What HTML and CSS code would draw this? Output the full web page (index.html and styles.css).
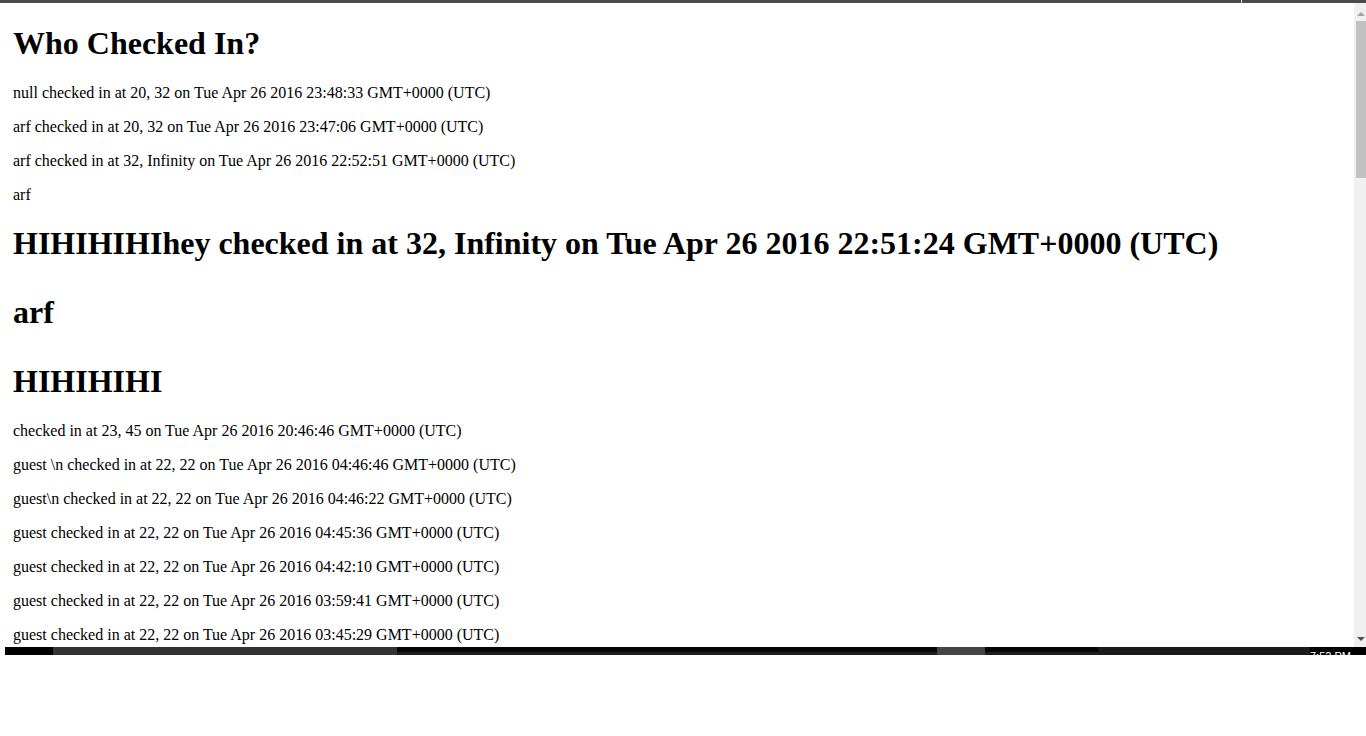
FILE: index.html
```html
<!DOCTYPE html>
<html>
<head>
<meta charset="utf-8">
<title>Who Checked In?</title>
<link rel="stylesheet" href="styles.css">
</head>
<body>
<div class="topbar"><span class="tick"></span></div>
<div class="window">
  <div class="page">
    <h1>Who Checked In?</h1>
    <p>null checked in at 20, 32 on Tue Apr 26 2016 23:48:33 GMT+0000 (UTC)</p>
    <p>arf checked in at 20, 32 on Tue Apr 26 2016 23:47:06 GMT+0000 (UTC)</p>
    <p>arf checked in at 32, Infinity on Tue Apr 26 2016 22:52:51 GMT+0000 (UTC)</p>
    <p>arf</p>
    <h1>HIHIHIHIhey checked in at 32, Infinity on Tue Apr 26 2016 22:51:24 GMT+0000 (UTC)</h1>
    <h1>arf</h1>
    <h1>HIHIHIHI</h1>
    <p>checked in at 23, 45 on Tue Apr 26 2016 20:46:46 GMT+0000 (UTC)</p>
    <p>guest \n checked in at 22, 22 on Tue Apr 26 2016 04:46:46 GMT+0000 (UTC)</p>
    <p>guest\n checked in at 22, 22 on Tue Apr 26 2016 04:46:22 GMT+0000 (UTC)</p>
    <p>guest checked in at 22, 22 on Tue Apr 26 2016 04:45:36 GMT+0000 (UTC)</p>
    <p>guest checked in at 22, 22 on Tue Apr 26 2016 04:42:10 GMT+0000 (UTC)</p>
    <p>guest checked in at 22, 22 on Tue Apr 26 2016 03:59:41 GMT+0000 (UTC)</p>
    <p>guest checked in at 22, 22 on Tue Apr 26 2016 03:45:29 GMT+0000 (UTC)</p>
  </div>
  <div class="scrollbar">
    <span class="arrow up"></span>
    <span class="thumb"></span>
    <span class="arrow down"></span>
  </div>
</div>
<div class="taskbar">
  <span class="seg black w48"></span>
  <span class="seg grey w344"></span>
  <span class="seg dark w540"></span>
  <span class="seg mid w48"></span>
  <span class="seg dark w113"></span>
  <span class="seg tray w212"></span>
  <span class="seg black fill"><span class="clock">7:52 PM</span></span>
</div>
</body>
</html>
```
FILE: styles.css
```css
html, body {
  margin: 0;
  padding: 0;
  background: #ffffff;
  overflow: hidden;
}

body {
  width: 1366px;
  height: 736px;
  font-family: "Liberation Serif", "Times New Roman", serif;
  color: #000000;
}

.topbar {
  position: relative;
  height: 3px;
  background: #4a4a4a;
}

.tick {
  position: absolute;
  left: 1241px;
  top: 0;
  width: 1px;
  height: 3px;
  background: #d8d8d8;
}

.window {
  display: flex;
  height: 644px;
  margin-left: 5px;
}

.page {
  flex: 1;
  overflow: hidden;
  padding: 2px 8px 0;
}

.page h1 {
  font-size: 32px;
  font-weight: bold;
  margin: 21.44px 0;
}

.page h1:first-child {
  margin-top: 20.44px;
}

.page h1 + h1 {
  margin-top: 32px;
}

.page p {
  font-size: 16px;
  margin: 16px 0;
}

.scrollbar {
  width: 12px;
  background: #f0f0f0;
  display: flex;
  flex-direction: column;
  align-items: flex-end;
}

.arrow {
  display: block;
  width: 0;
  height: 0;
  margin-right: 1px;
  border-left: 4px solid transparent;
  border-right: 4px solid transparent;
}

.arrow.up {
  margin-top: 9px;
  border-bottom: 4px solid #a3a3a3;
}

.arrow.down {
  margin-top: auto;
  margin-bottom: 6px;
  border-top: 4px solid #505050;
}

.thumb {
  display: block;
  width: 10px;
  height: 157px;
  margin-top: 5px;
  background: #c1c1c1;
}

.taskbar {
  display: flex;
  height: 8px;
  margin-left: 5px;
  overflow: hidden;
}

.seg {
  display: block;
  height: 8px;
}

.w48 { width: 48px; }
.w344 { width: 344px; }
.w540 { width: 540px; }
.w113 { width: 113px; }
.w212 { width: 212px; }
.fill { flex: 1; }

.black { background: #000000; }
.grey { background: #333333; }
.dark {
  background: #050505;
  border-bottom: 3px solid #1e1e1e;
  box-sizing: border-box;
}
.mid { background: #444444; }
.tray {
  background: #1a1a1a;
}

.fill {
  position: relative;
}

.clock {
  position: absolute;
  left: 0;
  top: 3px;
  font-family: "Liberation Sans", Arial, sans-serif;
  font-size: 11px;
  line-height: 12px;
  color: #ffffff;
  white-space: nowrap;
}
```
